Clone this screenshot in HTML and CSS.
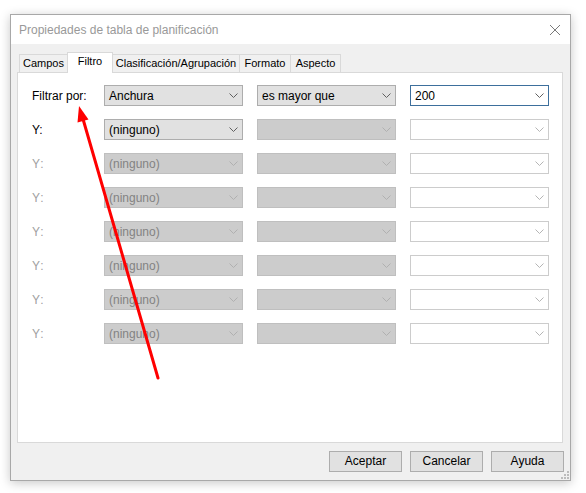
FILE: index.html
```
<!DOCTYPE html>
<html lang="es">
<head>
<meta charset="utf-8">
<title>Propiedades de tabla de planificación</title>
<link rel="stylesheet" href="styles.css">
</head>
<body>
<div class="window">
  <div class="titlebar">
    <span class="title">Propiedades de tabla de planificación</span>
    <svg class="close" width="12" height="12" viewBox="0 0 12 12"><path d="M1 1 L11 11 M11 1 L1 11" stroke="#7a7a7a" stroke-width="1" fill="none"/></svg>
  </div>
  <div class="body">
    <div class="tabs">
      <div class="tab t-campos">Campos</div>
      <div class="tab t-filtro active">Filtro</div>
      <div class="tab t-clas">Clasificación/Agrupación</div>
      <div class="tab t-formato">Formato</div>
      <div class="tab t-aspecto">Aspecto</div>
    </div>
    <div class="panel">
      <div class="row">
        <div class="label">Filtrar por:</div>
        <div class="combo"><span class="val">Anchura</span><svg class="chev" width="9" height="5" viewBox="0 0 9 5"><path d="M0.5 0.5 L4.5 4.5 L8.5 0.5" /></svg></div>
        <div class="combo"><span class="val">es mayor que</span><svg class="chev" width="9" height="5" viewBox="0 0 9 5"><path d="M0.5 0.5 L4.5 4.5 L8.5 0.5" /></svg></div>
        <div class="combo edit focus"><span class="val">200</span><svg class="chev" width="9" height="5" viewBox="0 0 9 5"><path d="M0.5 0.5 L4.5 4.5 L8.5 0.5" /></svg></div>
      </div>
      <div class="row">
        <div class="label">Y:</div>
        <div class="combo"><span class="val">(ninguno)</span><svg class="chev" width="9" height="5" viewBox="0 0 9 5"><path d="M0.5 0.5 L4.5 4.5 L8.5 0.5" /></svg></div>
        <div class="combo disabled"><span class="val"></span><svg class="chev" width="9" height="5" viewBox="0 0 9 5"><path d="M0.5 0.5 L4.5 4.5 L8.5 0.5" /></svg></div>
        <div class="combo edit disabled-edit"><span class="val"></span><svg class="chev" width="9" height="5" viewBox="0 0 9 5"><path d="M0.5 0.5 L4.5 4.5 L8.5 0.5" /></svg></div>
      </div>
      <div class="row">
        <div class="label dim">Y:</div>
        <div class="combo disabled"><span class="val">(ninguno)</span><svg class="chev" width="9" height="5" viewBox="0 0 9 5"><path d="M0.5 0.5 L4.5 4.5 L8.5 0.5" /></svg></div>
        <div class="combo disabled"><span class="val"></span><svg class="chev" width="9" height="5" viewBox="0 0 9 5"><path d="M0.5 0.5 L4.5 4.5 L8.5 0.5" /></svg></div>
        <div class="combo edit disabled-edit"><span class="val"></span><svg class="chev" width="9" height="5" viewBox="0 0 9 5"><path d="M0.5 0.5 L4.5 4.5 L8.5 0.5" /></svg></div>
      </div>
      <div class="row">
        <div class="label dim">Y:</div>
        <div class="combo disabled"><span class="val">(ninguno)</span><svg class="chev" width="9" height="5" viewBox="0 0 9 5"><path d="M0.5 0.5 L4.5 4.5 L8.5 0.5" /></svg></div>
        <div class="combo disabled"><span class="val"></span><svg class="chev" width="9" height="5" viewBox="0 0 9 5"><path d="M0.5 0.5 L4.5 4.5 L8.5 0.5" /></svg></div>
        <div class="combo edit disabled-edit"><span class="val"></span><svg class="chev" width="9" height="5" viewBox="0 0 9 5"><path d="M0.5 0.5 L4.5 4.5 L8.5 0.5" /></svg></div>
      </div>
      <div class="row">
        <div class="label dim">Y:</div>
        <div class="combo disabled"><span class="val">(ninguno)</span><svg class="chev" width="9" height="5" viewBox="0 0 9 5"><path d="M0.5 0.5 L4.5 4.5 L8.5 0.5" /></svg></div>
        <div class="combo disabled"><span class="val"></span><svg class="chev" width="9" height="5" viewBox="0 0 9 5"><path d="M0.5 0.5 L4.5 4.5 L8.5 0.5" /></svg></div>
        <div class="combo edit disabled-edit"><span class="val"></span><svg class="chev" width="9" height="5" viewBox="0 0 9 5"><path d="M0.5 0.5 L4.5 4.5 L8.5 0.5" /></svg></div>
      </div>
      <div class="row">
        <div class="label dim">Y:</div>
        <div class="combo disabled"><span class="val">(ninguno)</span><svg class="chev" width="9" height="5" viewBox="0 0 9 5"><path d="M0.5 0.5 L4.5 4.5 L8.5 0.5" /></svg></div>
        <div class="combo disabled"><span class="val"></span><svg class="chev" width="9" height="5" viewBox="0 0 9 5"><path d="M0.5 0.5 L4.5 4.5 L8.5 0.5" /></svg></div>
        <div class="combo edit disabled-edit"><span class="val"></span><svg class="chev" width="9" height="5" viewBox="0 0 9 5"><path d="M0.5 0.5 L4.5 4.5 L8.5 0.5" /></svg></div>
      </div>
      <div class="row">
        <div class="label dim">Y:</div>
        <div class="combo disabled"><span class="val">(ninguno)</span><svg class="chev" width="9" height="5" viewBox="0 0 9 5"><path d="M0.5 0.5 L4.5 4.5 L8.5 0.5" /></svg></div>
        <div class="combo disabled"><span class="val"></span><svg class="chev" width="9" height="5" viewBox="0 0 9 5"><path d="M0.5 0.5 L4.5 4.5 L8.5 0.5" /></svg></div>
        <div class="combo edit disabled-edit"><span class="val"></span><svg class="chev" width="9" height="5" viewBox="0 0 9 5"><path d="M0.5 0.5 L4.5 4.5 L8.5 0.5" /></svg></div>
      </div>
      <div class="row">
        <div class="label dim">Y:</div>
        <div class="combo disabled"><span class="val">(ninguno)</span><svg class="chev" width="9" height="5" viewBox="0 0 9 5"><path d="M0.5 0.5 L4.5 4.5 L8.5 0.5" /></svg></div>
        <div class="combo disabled"><span class="val"></span><svg class="chev" width="9" height="5" viewBox="0 0 9 5"><path d="M0.5 0.5 L4.5 4.5 L8.5 0.5" /></svg></div>
        <div class="combo edit disabled-edit"><span class="val"></span><svg class="chev" width="9" height="5" viewBox="0 0 9 5"><path d="M0.5 0.5 L4.5 4.5 L8.5 0.5" /></svg></div>
      </div>
    </div>
    <div class="buttons">
      <div class="btn">Aceptar</div>
      <div class="btn">Cancelar</div>
      <div class="btn">Ayuda</div>
    </div>
  </div>
  <svg class="grip" width="9" height="9" viewBox="0 0 9 9">
    <rect x="6" y="0" width="2" height="2"/>
    <rect x="3" y="3" width="2" height="2"/><rect x="6" y="3" width="2" height="2"/>
    <rect x="0" y="6" width="2" height="2"/><rect x="3" y="6" width="2" height="2"/><rect x="6" y="6" width="2" height="2"/>
  </svg>
</div>
<svg class="arrow" width="586" height="493" viewBox="0 0 586 493">
  <line x1="158" y1="378" x2="83" y2="119" stroke="#ff0000" stroke-width="3" stroke-linecap="round"/>
  <polygon points="79,106 88.5,119.5 77.5,122.5" fill="#ff0000"/>
</svg>
</body>
</html>
```
FILE: styles.css
```
html, body {
  margin: 0;
  padding: 0;
  background: #ffffff;
}
body {
  width: 586px;
  height: 493px;
  position: relative;
  overflow: hidden;
  font-family: "Liberation Sans", Arial, sans-serif;
  font-size: 12px;
  color: #000;
}
.window {
  box-sizing: border-box;
  margin: 14px 0 0 10px;
  width: 561px;
  height: 467px;
  border: 1px solid #a8a8a8;
  background: #f0f0f0;
  box-shadow: 0 2px 10px rgba(0, 0, 0, 0.22);
  position: relative;
  display: flex;
  flex-direction: column;
}
.titlebar {
  height: 29px;
  background: #ffffff;
  display: flex;
  align-items: center;
  padding-left: 8px;
  padding-right: 9px;
}
.title {
  color: #999999;
  font-size: 12px;
  flex: 1;
}
.close {
  display: block;
  margin-top: 1px;
}
.body {
  flex: 1;
  display: flex;
  flex-direction: column;
  padding-top: 8px;
}
.tabs {
  display: flex;
  align-items: flex-end;
  height: 20px;
  margin-left: 8px;
}
.tab {
  box-sizing: border-box;
  height: 18px;
  border: 1px solid #d9d9d9;
  border-bottom: none;
  background: #f0f0f0;
  text-align: center;
  line-height: 17px;
  font-size: 11px;
  margin-right: -1px;
  white-space: nowrap;
}
.tab.active {
  height: 21px;
  margin-bottom: -1px;
  background: #ffffff;
  position: relative;
  z-index: 1;
  line-height: 16px;
}
.t-campos { width: 49px; }
.t-filtro { width: 46px; }
.t-clas { width: 128px; }
.t-formato { width: 52px; }
.t-aspecto { width: 51px; }
.panel {
  box-sizing: border-box;
  height: 371px;
  margin: 0 7px 0 6px;
  background: #ffffff;
  border: 1px solid #d9d9d9;
  padding: 12px 0 0 14px;
  display: flex;
  flex-direction: column;
  gap: 13px;
}
.row {
  display: flex;
  align-items: center;
  height: 21px;
}
.label {
  width: 72px;
}
.label.dim {
  color: #a0a0a0;
  letter-spacing: 1px;
}
.combo {
  box-sizing: border-box;
  width: 139px;
  height: 21px;
  margin-right: 14px;
  border: 1px solid #adadad;
  background: #e1e1e1;
  display: flex;
  align-items: center;
  padding-left: 4px;
}
.combo .val {
  flex: 1;
  white-space: nowrap;
}
.chev {
  display: block;
  margin-right: 4px;
}
.chev path {
  fill: none;
  stroke: #606060;
  stroke-width: 1;
}
.combo.edit {
  background: #ffffff;
  margin-right: 0;
}
.combo.focus {
  border-color: #3d6f9c;
}
.combo.disabled {
  background: #cccccc;
  border-color: #bfbfbf;
  color: #838383;
}
.combo.disabled .chev path {
  stroke: #b0b0b0;
}
.combo.disabled-edit {
  border-color: #cccccc;
}
.combo.disabled-edit .chev path {
  stroke: #b5b5b5;
}
.buttons {
  display: flex;
  justify-content: flex-end;
  gap: 8px;
  margin-top: 8px;
  padding-right: 6px;
}
.btn {
  box-sizing: border-box;
  width: 73px;
  height: 21px;
  border: 1px solid #adadad;
  background: #e1e1e1;
  text-align: center;
  line-height: 19px;
}
.grip {
  position: absolute;
  right: 0;
  bottom: 0;
  fill: #bcbcbc;
}
.arrow {
  position: absolute;
  left: 0;
  top: 0;
  pointer-events: none;
}
```
